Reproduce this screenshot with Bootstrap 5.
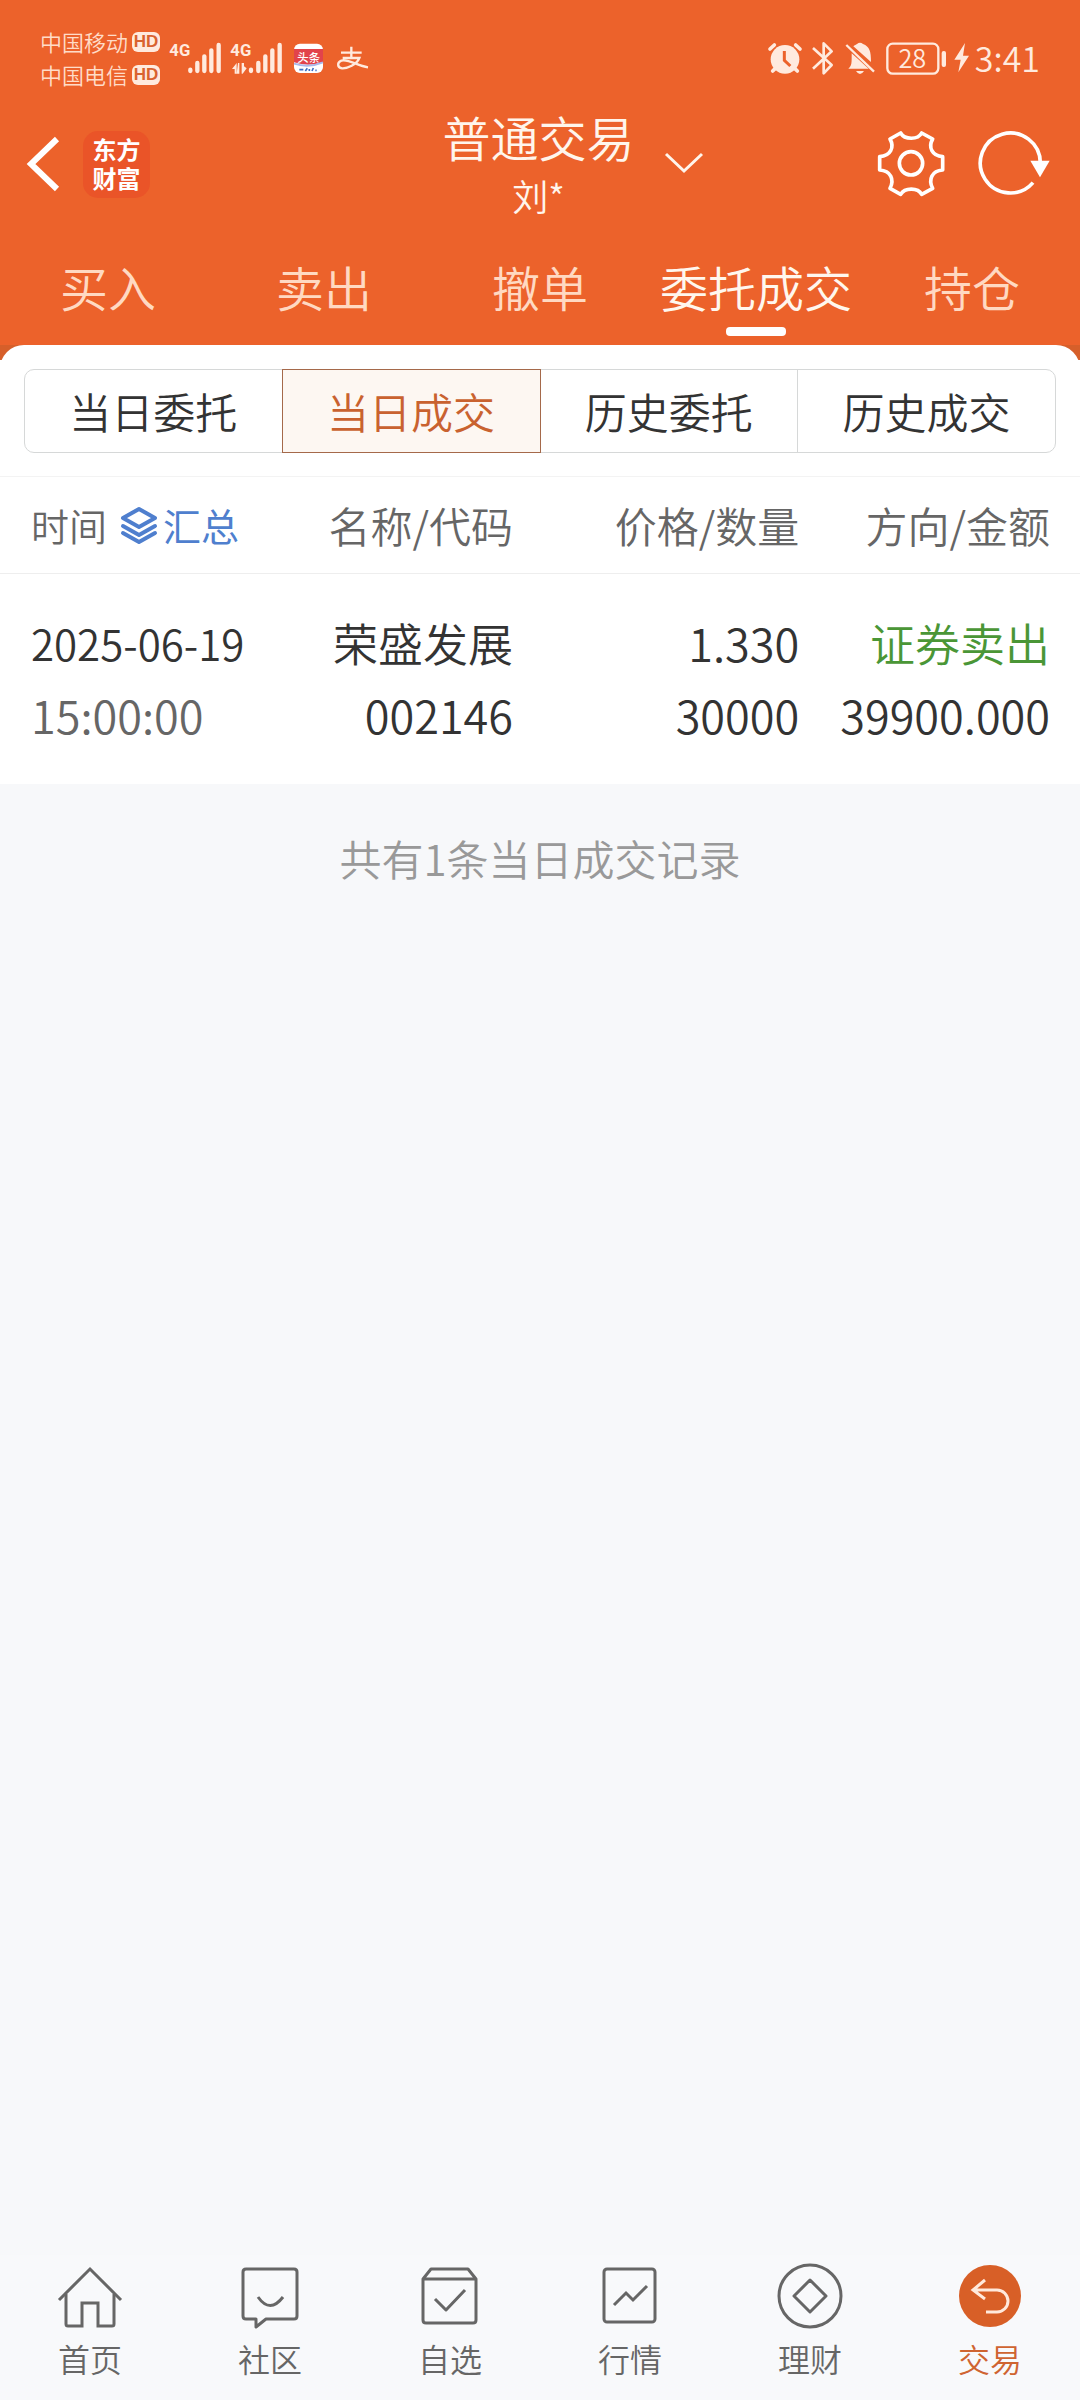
<!DOCTYPE html>
<html lang="zh-CN">
<head>
<meta charset="utf-8">
<meta name="viewport" content="width=device-width, initial-scale=1">
<title>普通交易</title>
<link href="https://cdn.jsdelivr.net/npm/bootstrap@5.3.0/dist/css/bootstrap.min.css" rel="stylesheet">
<style>
  body { font-family: "Noto Sans CJK SC", sans-serif; font-weight: 350; background: #f7f8fa; color: #333; }
  svg { display: block; flex: none; overflow: visible; }
  .app-head { background: #ec622b; color: #fff5ec; }
  .status-bar { height: 104px; padding: 12px 40px 0 40px; color: #ffeade; }
  .carrier { font-size: 22px; line-height: 33px; color: #ffdcc8; }
  .hd-tag { font: 700 17px/20px "Liberation Sans", sans-serif; width: 28px; border-radius: 6px; background: #ffeade; color: #d9622f; text-align: center; }
  .clock { font-size: 34px; line-height: 40px; }
  .signals { margin: 0 14px 0 8px; }
  .sys-icons { gap: 9px; }
  .title-bar { display: grid; grid-template-columns: 1fr auto 1fr; height: 120px; padding: 0 30px 0 27px; }
  .brand { width: 67px; height: 67px; margin-left: 24px; border-radius: 15px; background: #ea5428; font-size: 24px; line-height: 29px; font-weight: 700; padding-top: 3px; }
  .acct-title { font-size: 48px; line-height: 64px; }
  .acct-name { font-size: 36px; line-height: 54px; }
  .chev { margin-left: 30px; }
  .main-tabs { height: 121px; }
  .main-tabs .nav-link { font-size: 48px; line-height: 66px; padding: 29px 0 0; color: #ffd9c2; }
  .main-tabs .nav-link.active { color: #fff7ee; }
  .main-tabs .active::after { content: ""; display: block; width: 60px; height: 9px; margin: 8px auto 0; border-radius: 4px; background: #fff; }
  .sheet-wrap { background: linear-gradient(#d65f2a 15px, #fff 15px); }
  .sheet { border-radius: 24px 24px 0 0; padding: 24px 24px 23px; }
  .sub-tabs .btn { flex: 1 1 0; height: 84px; padding: 0; font-size: 42px; font-weight: 350; line-height: 70px; color: #333; border: 1px solid #d6d8d8; border-radius: 10px; }
  .sub-tabs .btn.active { background: #fdf7f2; color: #c9622f; border-color: #a5694a; }
  .deals { table-layout: fixed; --bs-table-bg: #fff; border-top: 1px solid #f3f3f3; }
  .deals th, .deals td { padding: 0; border: 0; text-align: right; white-space: nowrap; font-weight: 350; }
  .deals th { height: 97px; font-size: 42px; line-height: 60px; color: #666; border-bottom: 1px solid #eee; vertical-align: middle; }
  .deals td { font-size: 45px; line-height: 72px; color: #333; padding: 33px 0 33px; }
  .deals tr > :first-child { text-align: left; padding-left: 31px; }
  .deals tr > :last-child { padding-right: 30px; }
  .deals .time-head { font-size: 38px; }
  .deals .deal-date { font-size: 42px; }
  .deals .deal-time { color: #666; }
  .deals .sell { color: #4a9636; }
  .sum-btn { border: 0; background: none; padding: 0; color: #4f7fce; gap: 5px; margin-left: 13px; }
  .col-a { width: 25%; } .col-b { width: 22.5%; } .col-c { width: 26.5%; }
  .total { font-size: 42px; line-height: 60px; padding-top: 44px; color: #999; }
  .bottom-nav { height: 145px; background: #f8f9fb; }
  .bottom-nav a { flex: 1 1 0; font-size: 32px; line-height: 44px; color: #666; text-decoration: none; padding-top: 3px; }
  .bottom-nav a.active { color: #cf6431; }
  .bottom-nav svg { margin: 0 auto 8px; width: 70px; height: 70px; }
  .line { fill: none; stroke: currentColor; }
</style>
<script src="https://cdn.jsdelivr.net/npm/bootstrap@5.3.0/dist/js/bootstrap.bundle.min.js"></script>
</head>
<body>
<div class="d-flex flex-column min-vh-100">
  <header class="app-head">
    <div class="status-bar d-flex align-items-center">
      <div>
        <div class="carrier d-flex align-items-center gap-1"><span>中国移动</span><span class="hd-tag">HD</span></div>
        <div class="carrier d-flex align-items-center gap-1"><span>中国电信</span><span class="hd-tag">HD</span></div>
      </div>
      <svg class="signals" width="155" height="34" viewBox="506 122 465 102" fill="currentColor" role="img" aria-label="信号">
        <g font-family="Roboto, sans-serif" font-weight="700" font-size="50"><text x="510" y="168">4G</text><text x="693" y="168">4G</text></g>
        <g stroke="currentColor" stroke-width="13" stroke-linecap="round">
          <path d="M573 208v4M594 188v24M615 168v44M636 150v62M658 134v78"/>
          <path d="M755 208v4M777 188v24M798 168v44M819 150v62M841 134v78"/>
        </g>
        <path d="M698 206l14-18v32h-6v-14zM716 188h4v32h-8zM727 188h7v10l8 6-12 16h-3z"/>
        <rect x="884" y="130" width="87" height="88" rx="18" fill="#fff"/>
        <path d="M884 146h87v40q-44 14-87 0z" fill="#e2434b"/>
        <path d="M884 190q44 14 87-4" fill="none" stroke="#a9b8ea" stroke-width="6"/>
        <path d="M900 208h12M918 212l6-8M930 206v6M938 212l4-9M948 210h4" stroke="#3a6fc4" stroke-width="5"/>
        <text x="894" y="184" font-size="34" font-weight="500" fill="#fff">头条</text>
      </svg>
      <svg width="31" height="24" viewBox="1010 138 93 72" class="line" stroke-width="7" aria-label="支付">
        <path d="M1022 158h62M1053 140v32M1027 174h50c-8 20-36 32-52 31-15-2-15-18-2-23 22-6 48 16 80 20"/>
      </svg>
      <div class="sys-icons ms-auto d-flex align-items-center">
        <svg width="34" height="34" viewBox="84 122 102 102" fill="currentColor" aria-label="闹钟">
          <circle cx="135" cy="177" r="43"/>
          <path d="M90 146l13-12M180 146l-13-12M98 212l8-8M172 212l-8-8" stroke="currentColor" stroke-width="11" stroke-linecap="round"/>
          <path d="M133 152v28l18 17" fill="none" stroke="#ec622b" stroke-width="9"/>
        </svg>
        <svg width="24" height="34" viewBox="214 122 72 102"><path class="line" stroke-width="8" stroke-linejoin="round" d="M220 143l56 51-24 25v-90l24 24-56 52"/></svg>
        <svg width="32" height="34" viewBox="314 122 92 102" fill="currentColor">
          <path d="M325 205c11-8 10-18 10-46l51 46zM340 138c4-4 8-5 11-7q9-8 18 0c20 8 24 22 24 54zM348 212h24q-12 18-24 0z"/><path d="M319 134l83 80" stroke="currentColor" stroke-width="7"/>
        </svg>
        <div class="d-flex align-items-center gap-1">
          <svg width="64" height="34" viewBox="436 122 192 102" fill="currentColor">
            <rect x="443" y="130" width="153" height="90" rx="16" fill="none" stroke="currentColor" stroke-width="7"/><rect x="606" y="152" width="13" height="48" rx="6"/>
            <text x="518" y="203" text-anchor="middle" font-size="76">28</text>
          </svg>
          <svg width="18" height="30" viewBox="640 132 54 90" fill="currentColor"><path d="M676 132l-32 50h19l-7 38 32-50h-18z"/></svg>
          <span class="clock">3:41</span>
        </div>
      </div>
    </div>

    <div class="title-bar">
      <div class="d-flex align-items-center">
        <a href="#" class="text-white" aria-label="返回"><svg width="32" height="56" viewBox="0 0 32 56"><path class="line" stroke-width="6" d="M30 3L4 28l26 25"/></svg></a>
        <div class="brand text-center text-white">东方<br>财富</div>
      </div>
      <div class="text-center">
        <div class="acct-title">普通交易</div>
        <div class="acct-name">刘*</div>
      </div>
      <div class="d-flex align-items-center">
        <svg class="chev" width="38" height="22" viewBox="0 0 38 22"><path class="line" stroke-width="3" d="M1 1l18 17L37 1"/></svg>
        <a href="#" class="ms-auto text-white" aria-label="设置"><svg width="68" height="66" viewBox="412 391 204 198"><g class="line" stroke-width="11" stroke-linejoin="round"><path d="M480 397C492 418 532 418 543 397L576 415C562 440 574 466 606 468V508C574 510 562 536 576 563L543 581C532 560 492 560 480 581L448 563C462 536 450 510 417 508V468C450 466 462 440 448 415Z"/><circle cx="511" cy="488" r="35"/></g></svg></a>
        <a href="#" class="text-white ms-4 ps-2" aria-label="刷新"><svg width="72" height="66" viewBox="715 391 216 198"><path class="line" stroke-width="11" d="M880 546A90 90 0 1 1 902 488"/><path fill="currentColor" d="M872 480h58l-29 50z"/></svg></a>
      </div>
    </div>

    <nav class="nav nav-justified main-tabs flex-nowrap">
      <a class="nav-link" href="#">买入</a>
      <a class="nav-link" href="#">卖出</a>
      <a class="nav-link" href="#">撤单</a>
      <a class="nav-link active" aria-current="page" href="#">委托成交</a>
      <a class="nav-link" href="#">持仓</a>
    </nav>
  </header>

  <main class="flex-grow-1">
    <div class="sheet-wrap">
      <div class="sheet bg-white">
        <div class="btn-group sub-tabs d-flex">
          <button type="button" class="btn">当日委托</button>
          <button type="button" class="btn active">当日成交</button>
          <button type="button" class="btn">历史委托</button>
          <button type="button" class="btn">历史成交</button>
        </div>
      </div>
    </div>
    <table class="table deals mb-0">
      <colgroup><col class="col-a"><col class="col-b"><col class="col-c"><col></colgroup>
      <thead>
        <tr>
          <th scope="col" class="time-head"><div class="d-flex align-items-center">时间<button type="button" class="sum-btn d-flex align-items-center"><svg width="38" height="38" viewBox="0 0 38 38"><g class="line" stroke-width="4" stroke-linejoin="round" stroke-linecap="round"><path d="M19 3l16 9-16 9L3 12z"/><path d="M3 20l16 9 16-9M3 27l16 9 16-9"/></g></svg>汇总</button></div></th>
          <th scope="col">名称/代码</th>
          <th scope="col">价格/数量</th>
          <th scope="col">方向/金额</th>
        </tr>
      </thead>
      <tbody>
        <tr>
          <td><div class="deal-date">2025-06-19</div><div class="deal-time">15:00:00</div></td>
          <td><div>荣盛发展</div><div>002146</div></td>
          <td><div>1.330</div><div>30000</div></td>
          <td><div class="sell">证券卖出</div><div>39900.000</div></td>
        </tr>
      </tbody>
    </table>
    <p class="total text-center mb-0">共有1条当日成交记录</p>
  </main>

  <nav class="bottom-nav d-flex text-center">
    <a href="#"><svg viewBox="0 0 70 70"><g class="line" stroke-width="3"><path d="M4 42L35 11l31 31"/><path d="M11 36v30q0 2 2 2h14V45h16v23h14q2 0 2-2V36"/></g></svg>首页</a>
    <a href="#"><svg viewBox="0 0 70 70"><g class="line" stroke-width="3" stroke-linejoin="round"><path d="M11 11h48q3 0 3 3v44q0 3-3 3H31l-10 8v-8H11q-3 0-3-3V14q0-3 3-3z"/><path d="M23 39q12 17 25 0"/></g></svg>社区</a>
    <a href="#"><svg viewBox="0 0 70 70"><g class="line" stroke-width="3" stroke-linejoin="round"><path d="M8 21l8-10h37l8 10v41q0 3-3 3H11q-3 0-3-3zM8 21h53"/><path d="M20 41l11 11 19-20"/></g></svg>自选</a>
    <a href="#"><svg viewBox="0 0 70 70"><g class="line" stroke-width="3"><rect x="9" y="11" width="51" height="53" rx="3"/><path d="M19 47l12-12 7 7 14-14"/></g></svg>行情</a>
    <a href="#"><svg viewBox="0 0 70 70"><g class="line" stroke-width="3" stroke-linejoin="round"><circle cx="35" cy="38" r="31"/><path d="M35 22l16 16-16 16-16-16z"/></g></svg>理财</a>
    <a href="#" class="active"><svg viewBox="0 0 70 70"><circle cx="35" cy="38" r="31" fill="#d85f27"/><path fill="none" stroke="#ffe9dc" stroke-width="3" d="M30 22L18 32l12 9M18 32h24a11 11 0 0 1 0 22H31"/></svg>交易</a>
  </nav>
</div>
</body>
</html>
